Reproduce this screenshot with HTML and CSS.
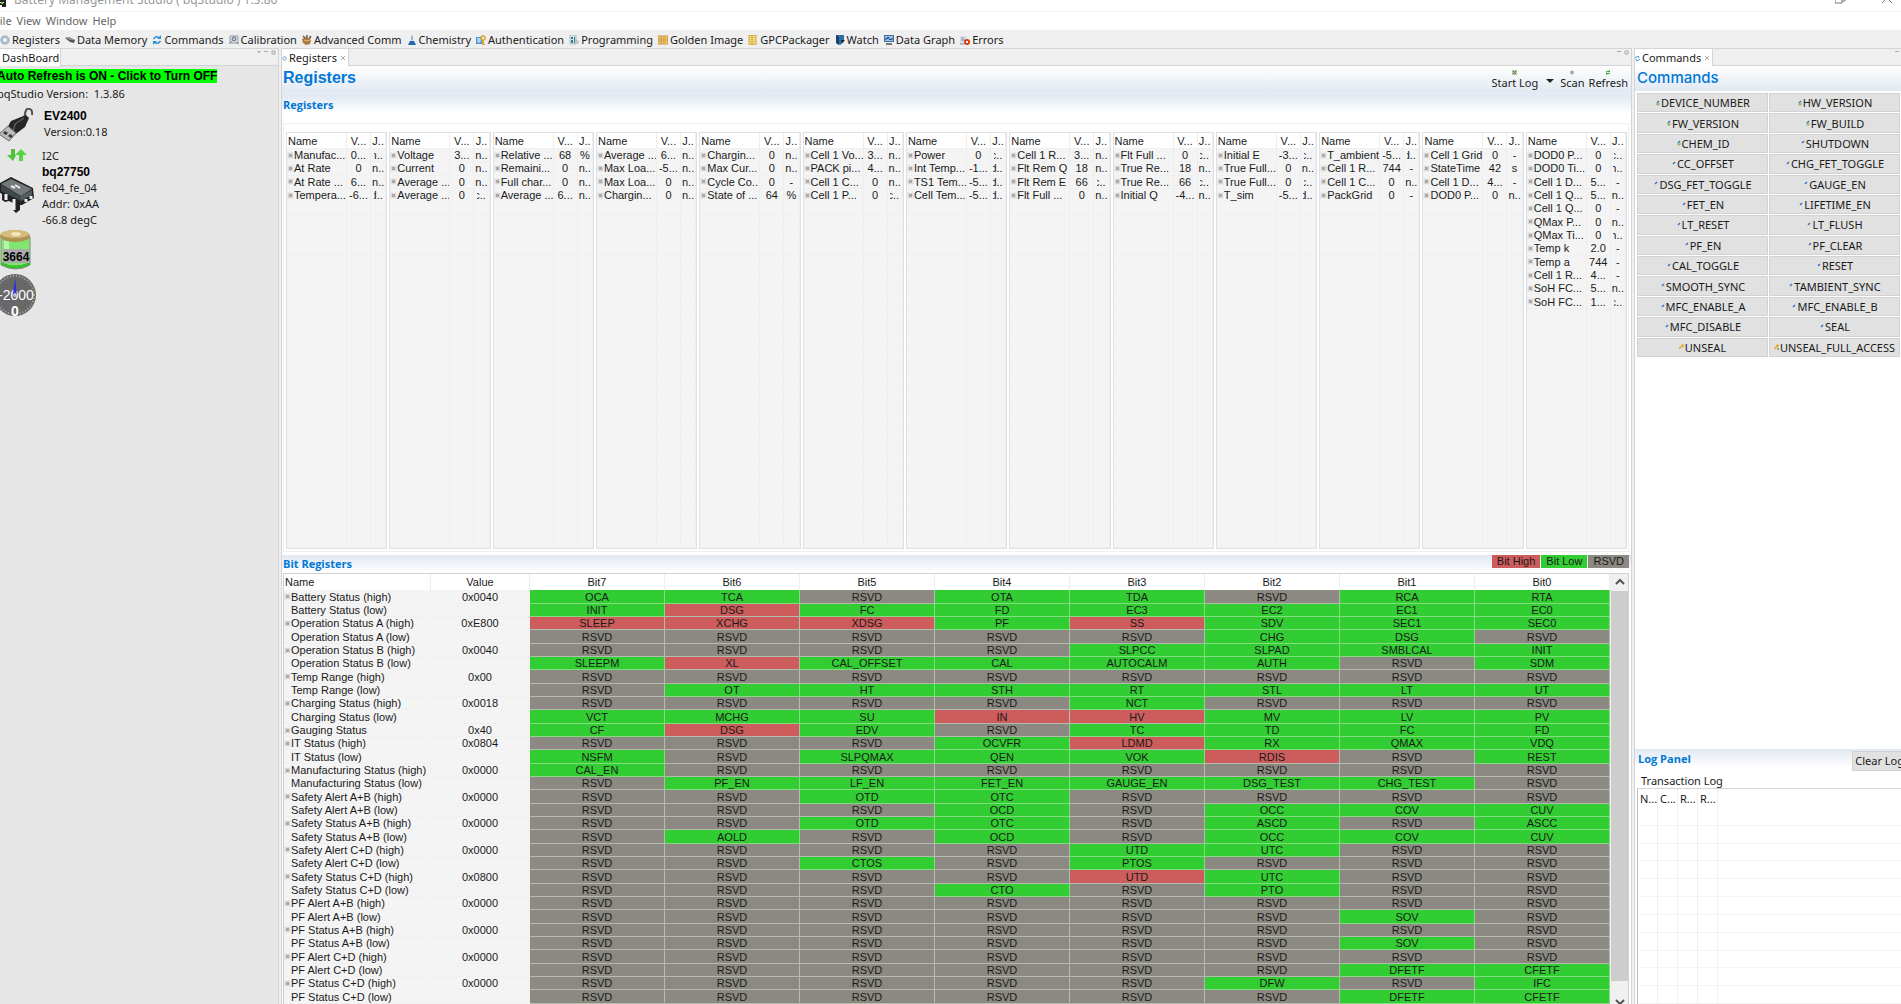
FILE: index.html
```html
<!DOCTYPE html>
<html lang="en">
<head>
    <meta charset="UTF-8">
    <meta name="viewport" content="width=device-width, initial-scale=1.0">
    <title>Battery Management Studio ( bqStudio ) 1.3.86</title>
    <link rel="stylesheet" href="styles.css">
</head>
<body>

    <header class="titlebar">
        <svg class="app-icon" viewBox="0 0 6 7"><path d="M0 1h5v6M0 4h3v3" fill="none" stroke="#222" stroke-width="2"/><path d="M1 2h2v2H1z" fill="#6c3"/></svg>
        <span class="app-title">Battery Management Studio ( bqStudio ) 1.3.86</span>
        <svg class="win-icons" viewBox="0 0 58 4"><path d="M0 0v3h7V0M7 1h3V0M47 3l5-5 5 5" fill="none" stroke="#777"/></svg>
    </header>

    <nav class="menubar">
        <button>File</button>
        <button>View</button>
        <button>Window</button>
        <button>Help</button>
    </nav>

    <div class="toolbar">
        <button><svg viewBox="0 0 10 10"><circle cx="5" cy="5" r="3.4" fill="none" stroke="#9db8cc" stroke-width="2.4"/><circle cx="5" cy="5" r="4.4" fill="none" stroke="#b5c9d8" stroke-dasharray="1.5 1.5"/></svg>Registers</button>
        <button><svg viewBox="0 0 10 10"><path d="M0 3l4-1 6 3-1 3-4-1z" fill="#555"/><path d="M0 3l4-1 6 3-4 0z" fill="#999"/></svg>Data Memory</button>
        <button><svg viewBox="0 0 10 10"><path d="M1.500 4q3-4 6-1M8.500 6q-3 4-6 1" fill="none" stroke="#2f93cf" stroke-width="1.6"/><path d="M9 0v4H5zM1 10V6h4z" fill="#2f93cf"/></svg>Commands</button>
        <button><svg viewBox="0 0 10 10"><path d="M1 1h8v7H1z" fill="#e8eef5" stroke="#8d95a5"/><circle cx="5" cy="4" r="2" fill="#b9c8dc" stroke="#667"/><path d="M0 9l3-3M7 7l3 2" stroke="#889"/></svg>Calibration</button>
        <button><svg viewBox="0 0 10 10"><path d="M0 4l4-2 5 3-1 4-4 1-3-2z" fill="#a67b3c"/><path d="M1 1l2 2M5 0v3M9 1L7 4" stroke="#685b4a" stroke-width="1.5"/><path d="M2 5l3 1 3-1" fill="none" stroke="#e1bd72"/></svg>Advanced Comm</button>
        <button><svg viewBox="0 0 10 10"><path d="M4 0h2v4l3 6H1l3-6z" fill="#c9dcf0"/><path d="M3 6h4l2 4H1z" fill="#2468ae"/><path d="M5 1v4" stroke="#6992bd"/></svg>Chemistry</button>
        <button><svg viewBox="0 0 10 10"><path d="M0 2h6v7H0z" fill="#5794db"/><path d="M1 4h4M1 6h4M3 3v5" stroke="#d9eaff"/><circle cx="7" cy="3" r="2" fill="none" stroke="#d7a52c" stroke-width="1.5"/><path d="M7 5v5h2" fill="none" stroke="#d7a52c" stroke-width="2"/></svg>Authentication</button>
        <button><svg viewBox="0 0 10 10"><path d="M1 0h6v9H1z" fill="#d9e4e8" stroke="#aabac1"/><path d="M2 2h2v2H2zM2 5h2v3H2zM5 2h1v6H5z" fill="#397b92"/><circle cx="8" cy="7" r="2" fill="#c1c6ca"/></svg>Programming</button>
        <button><svg viewBox="0 0 10 10"><path d="M0 1h10v8H0z" fill="#eec574" stroke="#cf993e"/><path d="M0 4h10M0 6h10M3 1v8M6 1v8" stroke="#c68e32" stroke-width=".6"/></svg>Golden Image</button>
        <button><svg viewBox="0 0 10 10"><path d="M1 0h7v10H1z" fill="#f5d66e" stroke="#cfa63d"/><path d="M4 0v10" stroke="#8b7436" stroke-dasharray="1 1"/></svg>GPCPackager</button>
        <button><svg viewBox="0 0 10 10"><path d="M1 0h8v7L5 10 1 8z" fill="#2c6fa7"/><path d="M1 0l3 2v8L1 8z" fill="#173f70"/><path d="M6 5h4L7 8z" fill="#222"/></svg>Watch</button>
        <button><svg viewBox="0 0 10 10"><path d="M0 0h10v7H0z" fill="#456c9a"/><path d="M1 1h8v5H1z" fill="#8fc3e8"/><path d="M1 4h2l1-2 2 3 1-1h2" fill="none" stroke="#193c73"/><path d="M2 9h6" stroke="#777" stroke-width="2"/></svg>Data Graph</button>
        <button><svg viewBox="0 0 10 10"><path d="M0 1h7v8H0z" fill="#d9dde5"/><path d="M1 3h3M1 5h4M0 9h4" stroke="#87909e"/><circle cx="7" cy="7" r="3" fill="#d63b12"/><path d="M6 6l2 2M8 6L6 8" stroke="#fff"/></svg>Errors</button>
    </div>

    <main class="workspace">

        <aside class="panel dashboard">
            <div class="tabs">
                <button class="tab">DashBoard</button>
                <svg class="tab-tools" viewBox="0 0 20 6"><path d="M1 1h4L3 3z" fill="#aaa"/><path d="M8 1h4v1H8z" fill="#aaa"/><path d="M16 1h3v3h-3z" fill="none" stroke="#aaa"/></svg>
            </div>
            <div class="dash-body">
                <button class="auto-refresh">Auto Refresh is ON - Click to Turn OFF</button>
                <p class="version">bqStudio Version:&nbsp; 1.3.86</p>
                <div class="dash-row adapter">
                    <svg viewBox="0 0 36 34" width="36" height="34"><path d="M26 12q-1-8 2-11 6-1 5 6" fill="none" stroke="#555" stroke-width="2"/><path d="M27 7l3 3-4 9-12 9-7-6 5-9z" fill="#262626"/><path d="M25 10l-9 6-2 8" fill="none" stroke="#777"/><path d="M9 18l8 7-7 8L0 26z" fill="#bbb" stroke="#666"/><path d="M6 23l3 2-2 2-3-2zM11 26l3 2-2 2-3-2z" fill="#333"/></svg>
                    <div>
                        <strong>EV2400</strong>
                        <p>Version:0.18</p>
                    </div>
                </div>
                <div class="dash-row device">
                    <div class="device-icons">
                        <svg viewBox="0 0 36 14" width="36" height="14"><path d="M14 13L8 7h4V1h4v6h1z" fill="#4ec339"/><path d="M22 1l-6 6h4v6h4V7h4z" fill="#58d343"/></svg>
                        <svg viewBox="0 0 36 38" width="36" height="38"><path d="M1 7l11-6 22 11 1 10-12 7-2 0v5l-4 3-3-3v-7l-4-2-4 1-3-2v-6l-3-2z" fill="#222"/><path d="M2 8l10-5 21 10-11 7z" fill="#73797b"/><path d="M2 9l20 11v5L2 15z" fill="#41484b"/><path d="M22 20l11-6v5l-11 6z" fill="#555c5f"/><path d="M7 18v6M15 23v11M27 23v3M32 20v3" stroke="#eee" stroke-width="3"/><path d="M12 10l4 2M16 9l5 3" stroke="#eee" stroke-width="2"/></svg>
                    </div>
                    <div>
                        <p>I2C</p>
                        <strong>bq27750</strong>
                        <p>fe04_fe_04</p>
                        <p>Addr: 0xAA</p>
                        <p>-66.8 degC</p>
                    </div>
                </div>
                <svg class="battery" viewBox="0 0 36 42" width="36" height="42">
                    <path d="M4 8h29v28q-14 8-29 0z" fill="#80e66f" stroke="#888"/><path d="M4 33q14 7 29 0v3q-14 7-29 0z" fill="#39bd31"/><path d="M7 12h5v22H7z" fill="#b7f5aa"/>
                    <ellipse cx="18" cy="7" rx="15" ry="6" fill="#ad9353"/><ellipse cx="18" cy="5" rx="14" ry="4" fill="#d4bd7c"/><ellipse cx="19" cy="5" rx="5" ry="2" fill="#f3e5b9"/>
                    <path d="M6 20h26v14H6z" fill="#aaa"/>
                    <text x="19" y="32" class="battery-text">3664</text>
                </svg>
                <svg class="gauge" viewBox="0 0 44 44" width="44" height="44">
                    <circle cx="22" cy="22" r="21" fill="#686868"/><circle cx="22" cy="22" r="19" fill="none" stroke="#aaa" stroke-width="2" stroke-dasharray="1 2"/>
                    <text x="23" y="27" class="gauge-text">-2000</text>
                    <path d="M20 22l2-17 2 17z" fill="#2c30dd"/><circle cx="22" cy="22" r="2" fill="#b9bdea"/>
                    <text x="22" y="43" class="gauge-value">0</text>
                </svg>
            </div>
        </aside>

        <section class="panel center">
            <div class="tabs">
                <button class="tab"><svg class="tab-icon" viewBox="0 0 5 5"><circle cx="2.5" cy="2.5" r="1.7" fill="none" stroke="#7a9fc0"/></svg>Registers<svg class="tab-close" viewBox="0 0 4 4"><path d="M0 0l4 4M4 0L0 4" stroke="#aaa"/></svg></button>
                <svg class="tab-tools" viewBox="0 0 20 6"><path d="M8 1h4v1H8z" fill="#aaa"/><path d="M16 1h3v3h-3z" fill="none" stroke="#aaa"/></svg>
            </div>
            <div class="form-head">
                <h1>Registers</h1>
                <div class="actions">
                    <button><svg viewBox="0 0 6 5"><path d="M0 0h5v5H0z" fill="#b5c9a2"/><path d="M1 1l3 3M4 1L1 4" stroke="#527a3f"/></svg>Start Log</button>
                    <span class="arrow"></span>
                    <button><svg viewBox="0 0 6 5"><circle cx="3" cy="2.5" r="2" fill="#aaa"/></svg>Scan</button>
                    <button><svg viewBox="0 0 6 5"><path d="M1 2q2-2 4 0M5 3q-2 2-4 0" fill="none" stroke="#36a03c"/><path d="M5 0v2H3zM1 5V3h2z" fill="#36a03c"/></svg>Refresh</button>
                </div>
            </div>
            <section class="registers">
                <h2>Registers</h2>
                <div class="reg-group" id="regGroup"></div>
            </section>
            <section class="bits">
                <div class="bits-head">
                    <h2>Bit Registers</h2>
                    <span class="legend high">Bit High</span>
                    <span class="legend low">Bit Low</span>
                    <span class="legend rsvd">RSVD</span>
                </div>
                <div class="bits-body">
                    <table class="bit-table">
                        <thead>
                            <tr><th class="name">Name</th><th class="value">Value</th><th>Bit7</th><th>Bit6</th><th>Bit5</th><th>Bit4</th><th>Bit3</th><th>Bit2</th><th>Bit1</th><th>Bit0</th></tr>
                        </thead>
                        <tbody id="bitRows"></tbody>
                    </table>
                    <div class="scrollbar">
                        <svg viewBox="0 0 17 17"><path d="M5 10l4-4 4 4" fill="none" stroke="#555" stroke-width="2"/></svg>
                        <div class="thumb"></div>
                        <svg class="down" viewBox="0 0 17 17"><path d="M5 9l4 4 4-4" fill="none" stroke="#555" stroke-width="2"/></svg>
                    </div>
                </div>
            </section>
        </section>

        <aside class="panel right">
            <div class="tabs">
                <button class="tab"><svg class="tab-icon" viewBox="0 0 5 5"><path d="M0 2l3-2 1 2M5 3L2 5 1 3" fill="none" stroke="#2f93cf"/></svg>Commands<svg class="tab-close" viewBox="0 0 4 4"><path d="M0 0l4 4M4 0L0 4" stroke="#aaa"/></svg></button>
                <svg class="tab-tools" viewBox="0 0 20 6"><path d="M16 1h4v1h-4z" fill="#aaa"/></svg>
            </div>
            <div class="command-head"><h1>Commands</h1></div>
            <div class="command-grid" id="commandGrid"></div>
            <section class="log">
                <div class="log-head">
                    <h2>Log Panel</h2>
                    <button class="clear">Clear Log</button>
                </div>
                <h3>Transaction Log</h3>
                <div class="log-body">
                    <table class="log-table">
                        <thead><tr><th>N...</th><th>C...</th><th>R...</th><th>R...</th><th></th></tr></thead>
                        <tbody id="logRows"></tbody>
                    </table>
                </div>
            </section>
        </aside>

    </main>

    <script src="script.js"></script>
</body>
</html>
```

FILE: styles.css
```css
* {
    margin: 0;
    padding: 0;
    box-sizing: border-box;
}

body {
    height: 100vh;
    display: flex;
    flex-direction: column;
    overflow: hidden;
    background: #fff;
    color: #1a1a1a;
    font-family: "Noto Sans", "Open Sans", sans-serif;
    font-size: 11px;
    line-height: 16px;
}

button {
    background: none;
    border: none;
    color: inherit;
    font: inherit;
    white-space: nowrap;
}

svg {
    display: block;
    flex: none;
}

h1 {
    font-family: "Liberation Sans", Arial, sans-serif;
    font-size: 16px;
    line-height: 24px;
    color: #0078d7;
}

h2 {
    font-family: "Open Sans", "Noto Sans", sans-serif;
    font-size: 11px;
    line-height: 18px;
    color: #0078d7;
}

/* Title, menu and toolbar */
.titlebar {
    height: 12px;
    display: flex;
    align-items: flex-start;
    overflow: hidden;
    border-bottom: 1px solid #f2f2f2;
    color: #999;
    font-size: 12px;
}

.app-icon {
    width: 6px;
    height: 7px;
}

.app-title {
    flex: 1;
    margin-top: -8px;
    padding-left: 8px;
}

.win-icons {
    width: 58px;
    height: 4px;
    margin-right: 8px;
}

.menubar {
    height: 18px;
    display: flex;
    gap: 5px;
    margin-left: -6px;
    color: #666;
}

.menubar button {
    line-height: 18px;
}

.toolbar {
    height: 18px;
    display: flex;
    gap: 5px;
    background: #efefef;
}

.toolbar button {
    display: flex;
    align-items: center;
    gap: 2px;
    padding-top: 2px;
}

.toolbar svg {
    width: 10px;
    height: 10px;
}

/* Panels */
.workspace {
    flex: 1;
    min-height: 0;
    display: flex;
    gap: 2px;
    background: #f0f0f0;
}

.panel {
    display: flex;
    flex-direction: column;
    min-width: 0;
    background: #fff;
    border-right: 1px solid #d4d4d4;
    border-left: 1px solid #d4d4d4;
}

.tabs {
    flex: none;
    height: 18px;
    display: flex;
    justify-content: space-between;
    align-items: flex-start;
    background: #efefef;
    border-top: 1px solid #d4d4d4;
    border-bottom: 1px solid #d4d4d4;
}

.tab {
    height: 17px;
    display: flex;
    align-items: center;
    gap: 2px;
    padding: 1px 1px 0 0;
    background: #fff;
    border-right: 1px solid #d4d4d4;
}

.tab-icon {
    width: 5px;
    height: 5px;
}

.tab-close {
    width: 4px;
    height: 4px;
    margin: 0 2px;
}

.tab-tools {
    width: 20px;
    height: 6px;
    margin: 1px 2px;
}

/* Dashboard */
.dashboard {
    width: 279px;
    background: #e6e6e6;
    border-left: none;
}

.dashboard .tab {
    padding-left: 2px;
}

.dash-body {
    margin-left: -3px;
    padding-top: 3px;
}

.auto-refresh {
    display: block;
    background: #0f0;
    color: #000;
    font: bold 12px/14px "Liberation Sans", Arial, sans-serif;
}

.version {
    padding-top: 3px;
}

.dash-row {
    display: flex;
    gap: 9px;
}

.dash-row strong {
    display: block;
    color: #000;
    font: bold 12px/16px "Liberation Sans", Arial, sans-serif;
}

.adapter {
    padding: 6px 0 6px 2px;
}

.device {
    gap: 7px;
    padding-left: 2px;
}

.device-icons {
    display: flex;
    flex-direction: column;
    gap: 14px;
}

.battery {
    margin-top: 1px;
}

.gauge {
    margin: 2px 0 0 -4px;
}

.battery-text {
    font: bold 12px "Liberation Sans", sans-serif;
    text-anchor: middle;
}

.gauge-text,
.gauge-value {
    fill: #fff;
    font: 14px "Liberation Sans", sans-serif;
    text-anchor: middle;
}

.gauge-value {
    font-weight: bold;
}

/* Registers */
.center {
    flex: 1;
}

.form-head {
    flex: none;
    height: 29px;
    display: flex;
    justify-content: space-between;
    padding: 0 3px 0 1px;
    background: linear-gradient(#fff, #e1e8f2);
    border-bottom: 2px solid #e6ecf5;
}

.actions {
    display: flex;
    gap: 4px;
    padding-top: 4px;
}

.actions button {
    display: flex;
    flex-direction: column;
    align-items: center;
}

.actions svg {
    width: 6px;
    height: 5px;
}

.arrow {
    height: 4px;
    margin: 9px 2px 0 4px;
    border: 4px solid transparent;
    border-top-color: #222;
}

.registers {
    flex: 51;
    min-height: 0;
    display: flex;
    flex-direction: column;
    padding: 0 2px 3px 1px;
    background: linear-gradient(#e1e8f2, #fff 18px);
}

.registers h2 {
    padding: 1px 0 9px;
}

.reg-group {
    flex: 1;
    min-height: 0;
    display: flex;
    gap: 2px;
    padding: 8px 1px 2px 2px;
    border: 1px solid #f0f0f0;
}

.reg-box {
    flex: 1;
    min-width: 0;
    border: 1px solid #dde1e6;
    background: #f4f4f4;
}

table {
    width: 100%;
    height: 100%;
    table-layout: fixed;
    border-collapse: separate;
    border-spacing: 0;
    font: 11px/12px "Liberation Sans", Arial, sans-serif;
}

th {
    font-weight: normal;
    background: #fff;
}

td,
th {
    overflow: hidden;
    white-space: nowrap;
    text-align: center;
}

td.name,
th.name {
    text-align: left;
}

.reg-box th {
    height: 16px;
}

.reg-box th,
.reg-box td {
    border-right: 1px solid #eee;
    border-bottom: 1px solid #f0f0f0;
}

.reg-box .name {
    width: 60px;
}

.reg-box .value {
    width: 24px;
}

th.name {
    padding-left: 1px;
}

.mark {
    display: inline-block;
    width: 5px;
    height: 5px;
    margin: 0 1px 2px 1px;
    vertical-align: middle;
    background: #aaa;
    border: 1px solid #dadada;
    outline: 1px solid #ececec;
}

.mark.none {
    visibility: hidden;
}

.cut {
    display: inline-block;
    overflow: hidden;
    vertical-align: top;
    text-indent: -3px;
}

/* Bit registers */
.bits {
    flex: 50;
    min-height: 0;
    display: flex;
    flex-direction: column;
    padding: 0 2px 0 1px;
    background: linear-gradient(#e1e8f2, #fff 18px);
}

.bits-head {
    height: 18px;
    display: flex;
    gap: 1px;
}

.bits-head h2 {
    flex: 1;
}

.legend {
    height: 13px;
    padding: 0 5px;
    font: 11px/13px "Liberation Sans", Arial, sans-serif;
}

.high {
    background: #cd5c5c;
}

.low {
    background: #32cd32;
}

.rsvd {
    background: #8b8981;
}

.bits-body {
    flex: 1;
    min-height: 0;
    display: flex;
    border: 1px solid #d0d0d0;
    border-bottom: none;
}

.bit-table {
    flex: 1;
    background: #f4f4f4;
}

.bit-table th {
    height: 16px;
    border-right: 1px solid #eee;
}

.bit-table td {
    border-right: 1px solid #f0f0f0;
    border-bottom: 1px solid #f0f0f0;
}

.bit-table .name {
    width: 147px;
}

.bit-table .value {
    width: 99px;
}

.bit-table td.high,
.bit-table td.low,
.bit-table td.rsvd {
    border-color: #b4bcb0;
}

.bit-table td.low {
    border-color: #84dc80;
}

.scrollbar {
    width: 18px;
    display: flex;
    flex-direction: column;
    padding-left: 1px;
    background: #f0f0f0;
}

.scrollbar svg {
    width: 17px;
    height: 17px;
}

.scrollbar .down {
    margin-top: 10px;
    margin-bottom: -4px;
}

.thumb {
    flex: 1;
    background: #cdcdcd;
}

/* Commands */
.right {
    width: 267px;
    border-right: none;
}

.command-head {
    height: 25px;
    padding-left: 2px;
    background: linear-gradient(#fff, #e1e8f2);
}

.command-head h1 {
    font-family: Inter, "Liberation Sans", sans-serif;
    font-weight: 500;
    font-size: 15px;
}

.command-grid {
    height: 266px;
    display: grid;
    grid-template-columns: 1fr 1fr;
    grid-auto-rows: 1fr;
    gap: 1px;
    padding: 2px 1px 0 2px;
}

.command-grid button {
    display: flex;
    align-items: center;
    justify-content: center;
    gap: 1px;
    min-height: 0;
    min-width: 0;
    line-height: 17px;
    background: #e1e1e1;
    border: 1px solid #d2d2d2;
}

.command-grid svg {
    width: 5px;
    height: 6px;
}

/* Log panel */
.log {
    height: 255px;
    display: flex;
    flex-direction: column;
    margin-top: auto;
    padding-left: 2px;
    overflow: hidden;
    background: linear-gradient(#e1e8f2, #fff 18px);
}

.log-head {
    height: 24px;
    display: flex;
    justify-content: space-between;
}

.log-head h2 {
    padding-top: 1px;
    padding-left: 1px;
}

.clear {
    height: 20px;
    margin: 2px -6px 0 0;
    padding: 0 2px;
    background: #e1e1e1;
    border: 1px solid #d2d2d2;
}

.log h3 {
    padding-left: 4px;
    font-size: 11px;
    font-weight: normal;
    line-height: 15px;
}

.log-body {
    flex: 1;
    min-height: 0;
    border-top: 1px solid #d4d8de;
    border-left: 1px solid #b8c0c8;
}

.log-table {
    font-family: "Noto Sans", "Open Sans", sans-serif;
}

.log-table th {
    width: 20px;
    height: 19px;
    text-align: left;
    padding-left: 2px;
    border-right: 1px solid #f0f0f0;
}

.log-table th:last-child {
    width: auto;
}

.log-table td {
    border-right: 1px solid #f0f0f0;
    border-bottom: 1px solid #f4f4f4;
}

.log-table th:last-child,
.log-table td:last-child {
    border-right: none;
}
```

FILE: script.js
```js
// name, value, unit
const registers = [
    [["Manufac...", "0...", "h.."], ["At Rate", "0", "n.."], ["At Rate ...", "6...", "n.."], ["Tempera...", "-6...", "d.."]],
    [["Voltage", "3...", "n.."], ["Current", "0", "n.."], ["Average ...", "0", "n.."], ["Average ...", "0", "c.."]],
    [["Relative ...", "68", "%"], ["Remaini...", "0", "n.."], ["Full char...", "0", "n.."], ["Average ...", "6...", "n.."]],
    [["Average ...", "6...", "n.."], ["Max Loa...", "-5...", "n.."], ["Max Loa...", "0", "n.."], ["Chargin...", "0", "n.."]],
    [["Chargin...", "0", "n.."], ["Max Cur...", "0", "n.."], ["Cycle Co...", "0", "-"], ["State of ...", "64", "%"]],
    [["Cell 1 Vo...", "3...", "n.."], ["PACK pi...", "4...", "n.."], ["Cell 1 C...", "0", "n.."], ["Cell 1 P...", "0", "c.."]],
    [["Power", "0", "c.."], ["Int Temp...", "-1...", "d.."], ["TS1 Tem...", "-5...", "d.."], ["Cell Tem...", "-5...", "d.."]],
    [["Cell 1 R...", "3...", "n.."], ["Flt Rem Q", "18", "n.."], ["Flt Rem E", "66", "c.."], ["Flt Full ...", "0", "n.."]],
    [["Flt Full ...", "0", "c.."], ["True Re...", "18", "n.."], ["True Re...", "66", "c.."], ["Initial Q", "-4...", "n.."]],
    [["Initial E", "-3...", "c.."], ["True Full...", "0", "n.."], ["True Full...", "0", "c.."], ["T_sim", "-5...", "d.."]],
    [["T_ambient", "-5...", "d.."], ["Cell 1 R...", "744", "-"], ["Cell 1 C...", "0", "n.."], ["PackGrid", "0", "-"]],
    [["Cell 1 Grid", "0", "-"], ["StateTime", "42", "s"], ["Cell 1 D...", "4...", "-"], ["DOD0 P...", "0", "n.."]],
    [["DOD0 P...", "0", "c.."], ["DOD0 Ti...", "0", "h.."], ["Cell 1 D...", "5...", "-"], ["Cell 1 Q...", "5...", "n.."],
     ["Cell 1 Q...", "0", "-"], ["QMax P...", "0", "n.."], ["QMax Ti...", "0", "h.."], ["Temp k", "2.0", "-"],
     ["Temp a", "744", "-"], ["Cell 1 R...", "4...", "-"], ["SoH FC...", "5...", "n.."], ["SoH FC...", "1...", "c.."]]
];

// name, value, bit7..bit0 ("*" = bit high, "-" = reserved)
const bits = [
    ["Battery Status (high)", "0x0040", "OCA TCA - OTA TDA - RCA RTA"],
    ["Battery Status (low)", "", "INIT *DSG FC FD EC3 EC2 EC1 EC0"],
    ["Operation Status A (high)", "0xE800", "*SLEEP *XCHG *XDSG PF *SS SDV SEC1 SEC0"],
    ["Operation Status A (low)", "", "- - - - - CHG DSG -"],
    ["Operation Status B (high)", "0x0040", "- - - - SLPCC SLPAD SMBLCAL INIT"],
    ["Operation Status B (low)", "", "SLEEPM *XL CAL_OFFSET CAL AUTOCALM AUTH - SDM"],
    ["Temp Range (high)", "0x00", "- - - - - - - -"],
    ["Temp Range (low)", "", "- OT HT STH RT STL LT UT"],
    ["Charging Status (high)", "0x0018", "- - - - NCT - - -"],
    ["Charging Status (low)", "", "VCT MCHG SU *IN *HV MV LV PV"],
    ["Gauging Status", "0x40", "CF *DSG EDV - TC TD FC FD"],
    ["IT Status (high)", "0x0804", "- - - OCVFR *LDMD RX QMAX VDQ"],
    ["IT Status (low)", "", "NSFM - SLPQMAX QEN VOK *RDIS - REST"],
    ["Manufacturing Status (high)", "0x0000", "CAL_EN - - - - - - -"],
    ["Manufacturing Status (low)", "", "- PF_EN LF_EN FET_EN GAUGE_EN DSG_TEST CHG_TEST -"],
    ["Safety Alert A+B (high)", "0x0000", "- - OTD OTC - - - -"],
    ["Safety Alert A+B (low)", "", "- - - OCD - OCC COV CUV"],
    ["Safety Status A+B (high)", "0x0000", "- - OTD OTC - ASCD - ASCC"],
    ["Safety Status A+B (low)", "", "- AOLD - OCD - OCC COV CUV"],
    ["Safety Alert C+D (high)", "0x0000", "- - - - UTD UTC - -"],
    ["Safety Alert C+D (low)", "", "- - CTOS - PTOS - - -"],
    ["Safety Status C+D (high)", "0x0800", "- - - - *UTD UTC - -"],
    ["Safety Status C+D (low)", "", "- - - CTO - PTO - -"],
    ["PF Alert A+B (high)", "0x0000", "- - - - - - - -"],
    ["PF Alert A+B (low)", "", "- - - - - - SOV -"],
    ["PF Status A+B (high)", "0x0000", "- - - - - - - -"],
    ["PF Status A+B (low)", "", "- - - - - - SOV -"],
    ["PF Alert C+D (high)", "0x0000", "- - - - - - - -"],
    ["PF Alert C+D (low)", "", "- - - - - - DFETF CFETF"],
    ["PF Status C+D (high)", "0x0000", "- - - - - DFW - IFC"],
    ["PF Status C+D (low)", "", "- - - - - - DFETF CFETF"]
];

const commands = ["DEVICE_NUMBER", "HW_VERSION", "FW_VERSION", "FW_BUILD", "CHEM_ID", "SHUTDOWN", "CC_OFFSET", "CHG_FET_TOGGLE",
    "DSG_FET_TOGGLE", "GAUGE_EN", "FET_EN", "LIFETIME_EN", "LT_RESET", "LT_FLUSH", "PF_EN", "PF_CLEAR", "CAL_TOGGLE", "RESET",
    "SMOOTH_SYNC", "TAMBIENT_SYNC", "MFC_ENABLE_A", "MFC_ENABLE_B", "MFC_DISABLE", "SEAL", "UNSEAL", "UNSEAL_FULL_ACCESS"];

const mark = '<span class="mark"></span>';

function unitCell(unit) {
    return "hdc".includes(unit[0]) ? `<span class="cut">${unit}</span>` : unit;
}

document.getElementById("regGroup").innerHTML = registers.map(list => {
    let rows = "";
    for (let i = 0; i < 30; i++) {
        const r = list[i];
        rows += r
            ? `<tr><td class="name">${mark}${r[0]}</td><td>${r[1]}</td><td>${unitCell(r[2])}</td></tr>`
            : "<tr><td>&nbsp;</td><td></td><td></td></tr>";
    }
    return `<div class="reg-box"><table><thead><tr><th class="name">Name</th><th class="value">V...</th><th>J..</th></tr></thead><tbody>${rows}</tbody></table></div>`;
}).join("");

document.getElementById("bitRows").innerHTML = bits.map(([name, value, cells]) => {
    const tds = cells.split(" ").map(c => {
        if (c === "-") return '<td class="rsvd">RSVD</td>';
        if (c[0] === "*") return `<td class="high">${c.slice(1)}</td>`;
        return `<td class="low">${c}</td>`;
    }).join("");
    const icon = value ? mark : '<span class="mark none"></span>';
    return `<tr><td class="name">${icon}${name}</td><td>${value}</td>${tds}</tr>`;
}).join("");

// read commands get a two-way arrow, write commands a single one, unseal a key
document.getElementById("commandGrid").innerHTML = commands.map((name, i) => {
    let icon = '<path d="M2 3l2-2" stroke="#3c6fc0" stroke-width="1.5"/>';
    if (i < 5) icon += '<path d="M2 3v2h2V3" fill="none" stroke="#77b255" stroke-width="1"/>';
    if (i > 23) icon = '<circle cx="3.5" cy="1.8" r="1.5" fill="#e5a63a"/><path d="M3 2L0 5" stroke="#e5a63a" stroke-width="1.5"/>';
    if (i === 25) icon += '<path d="M3 4h2v2H3z" fill="#77b255"/>';
    return `<button><svg viewBox="0 0 5 6">${icon}</svg>${name}</button>`;
}).join("");

document.getElementById("logRows").innerHTML = "<tr><td>&nbsp;</td><td></td><td></td><td></td><td></td></tr>".repeat(11);
```
